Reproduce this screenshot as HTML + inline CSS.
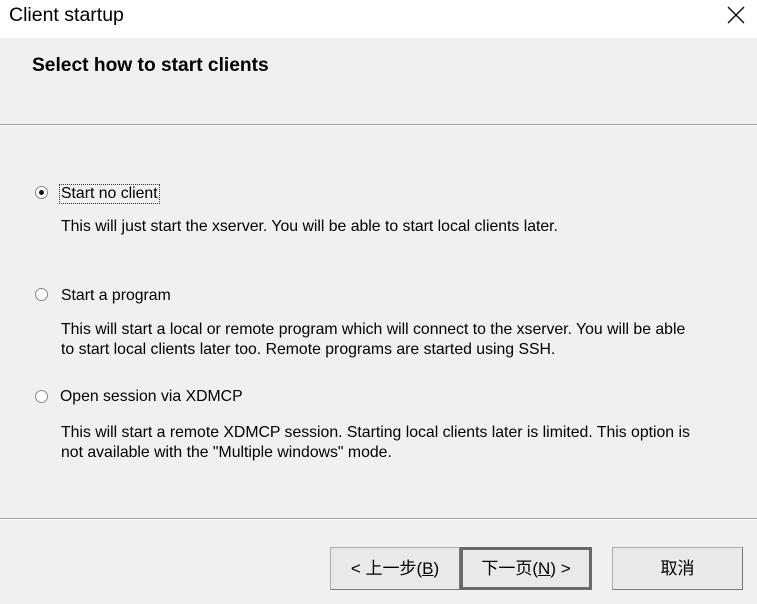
<!DOCTYPE html>
<html><head><style>
body{margin:0;width:757px;height:604px;background:#f0f0f0;font-family:"Liberation Sans","Noto Sans CJK SC",sans-serif;position:relative;overflow:hidden;color:#000}
.a{position:absolute;white-space:nowrap}
.t{font-size:15.8px}
.r{position:absolute;width:13px;height:13px;border-radius:50%;background:#fff;border:1px solid #888;box-sizing:border-box}
.r.on::after{content:"";position:absolute;left:3px;top:3px;width:5px;height:5px;border-radius:50%;background:#111}
.b{position:absolute;top:547px;height:43px;box-sizing:border-box;background:#e9e9e9;border:1px solid #adadad;border-right-color:#777;border-bottom-color:#777;font-size:17px;text-align:center;line-height:41px}
</style></head><body>
<div class="a" style="left:0;top:0;width:757px;height:38px;background:#fff"></div>
<div class="a" style="left:9px;top:4px;font-size:19.5px">Client startup</div>
<svg class="a" style="left:727px;top:6px" width="18" height="18"><path d="M1 1L17 17M17 1L1 17" stroke="#000" stroke-width="1.3"/></svg>
<div class="a" style="left:32px;top:55px;font-size:19.2px;font-weight:bold">Select how to start clients</div>
<div class="a" style="left:0;top:124px;width:757px;height:1px;background:#a0a0a0"></div>
<div class="a" style="left:0;top:125px;width:757px;height:1px;background:#fff"></div>

<div class="r on" style="left:35px;top:186px"></div>
<div class="a t" style="left:59px;top:184px;border:1px dotted #333;padding:0 1px">Start no client</div>
<div class="a t" style="left:61px;top:218px">This will just start the xserver. You will be able to start local clients later.</div>

<div class="r" style="left:35px;top:288px"></div>
<div class="a t" style="left:61px;top:287px">Start a program</div>
<div class="a t" style="left:61px;top:320px;line-height:20px">This will start a local or remote program which will connect to the xserver. You will be able<br>to start local clients later too. Remote programs are started using SSH.</div>

<div class="r" style="left:35px;top:390px"></div>
<div class="a t" style="left:60px;top:388px">Open session via XDMCP</div>
<div class="a t" style="left:61px;top:423px;line-height:20px">This will start a remote XDMCP session. Starting local clients later is limited. This option is<br>not available with the "Multiple windows" mode.</div>

<div class="a" style="left:0;top:518px;width:757px;height:1px;background:#a0a0a0"></div>
<div class="a" style="left:0;top:519px;width:757px;height:1px;background:#fff"></div>

<div class="b" style="left:330px;width:130px">&lt; 上一步(<u>B</u>)</div>
<div class="b" style="left:460px;width:132px;border:3px solid #6a6a6a;line-height:37px">下一页(<u>N</u>) &gt;</div>
<div class="b" style="left:612px;width:131px">取消</div>
</body></html>
